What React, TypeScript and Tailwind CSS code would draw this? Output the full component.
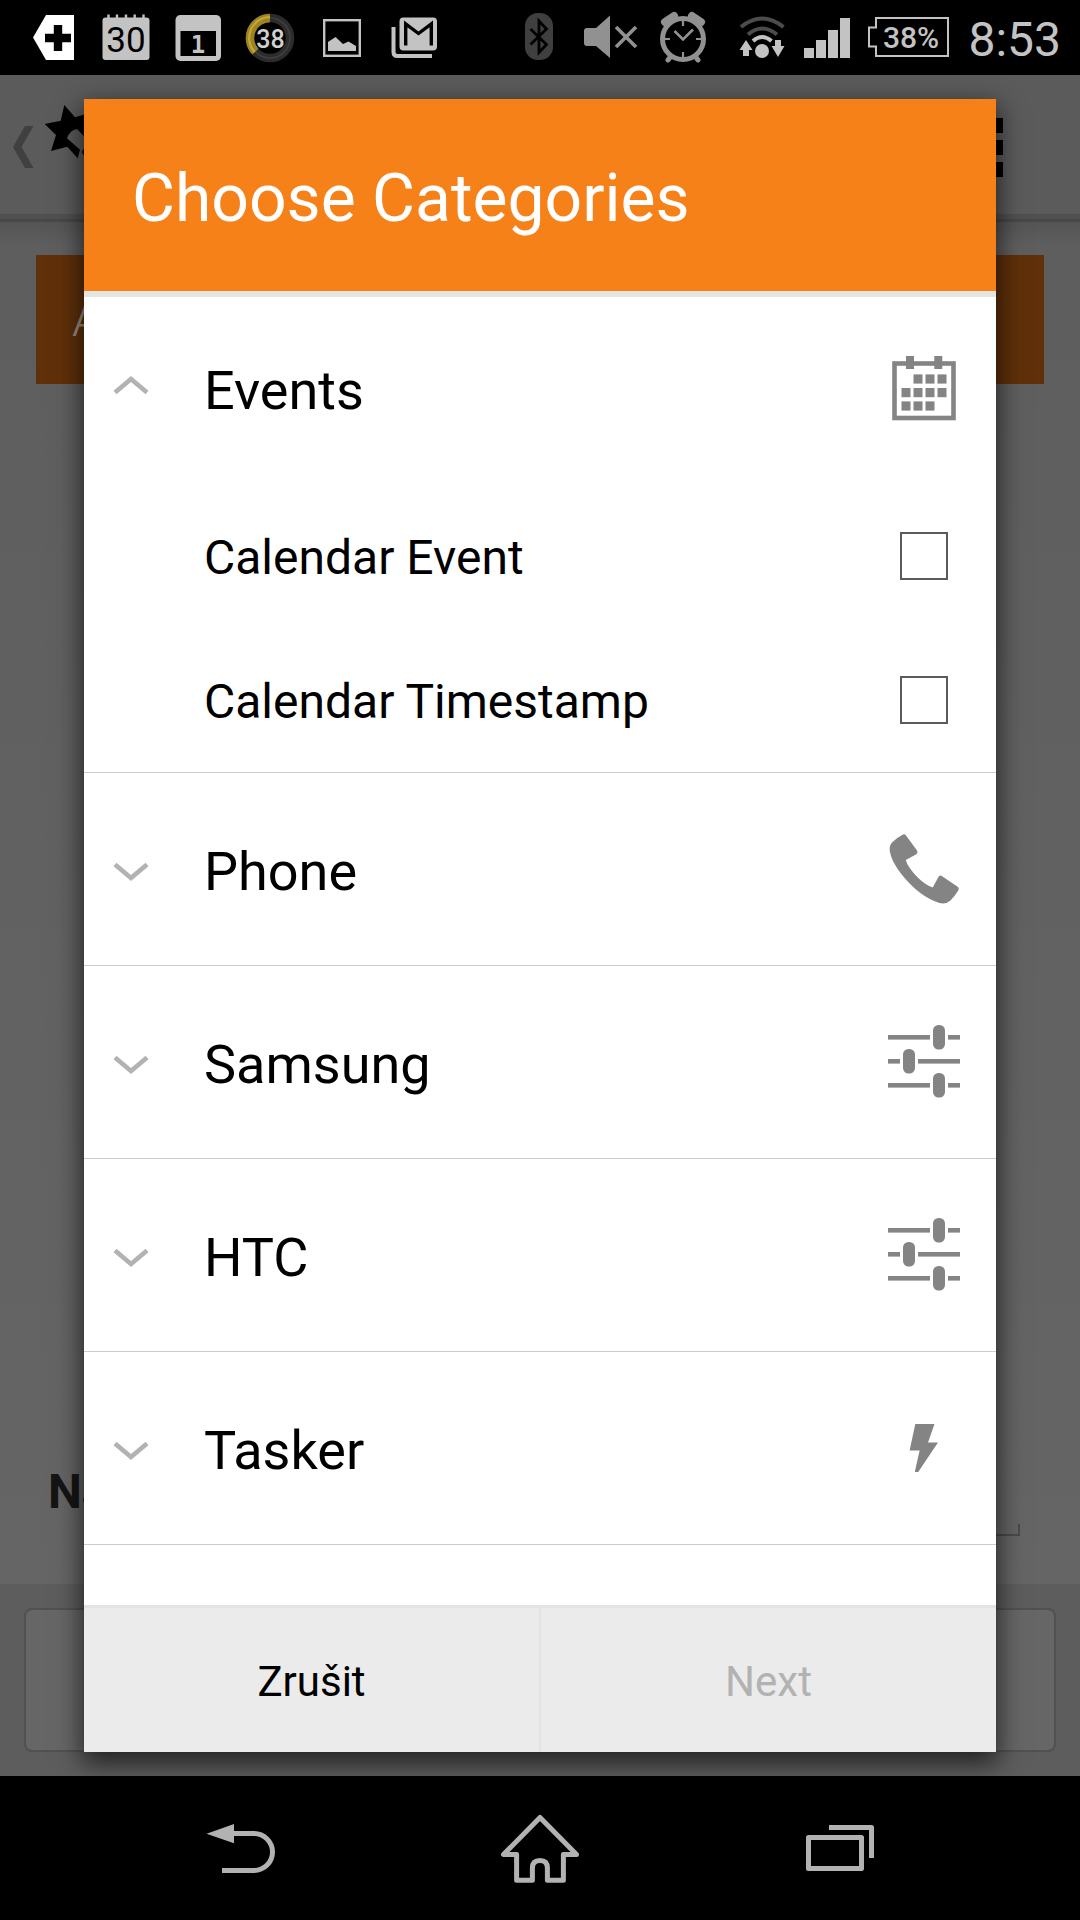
import React, { useState } from 'react';

interface Category {
  name: string;
  icon: React.ReactNode;
  items: string[];
}

const CalendarIcon = () => (
  <svg className="h-[72px] w-[72px]" viewBox="0 0 72 72" fill="#848484">
    <rect x="6.5" y="11.5" width="59" height="54.5" fill="none" stroke="#848484" strokeWidth="4.6" />
    <rect x="18" y="4" width="8" height="13" />
    <rect x="46.3" y="4" width="8" height="13" />
    {[25.5, 37.5, 49.5].map(x => <rect key={x} x={x} y="22.4" width="9" height="9.2" />)}
    {[13.5, 25.5, 37.5, 49.5].map(x => <rect key={x} x={x} y="36" width="9" height="9.2" />)}
    {[13.5, 25.5, 37.5].map(x => <rect key={x} x={x} y="49.4" width="9" height="9.2" />)}
  </svg>
);

const PhoneIcon = () => (
  <svg className="h-[72px] w-[72px]" viewBox="0 0 72 72" fill="#848484">
    <path d="M15 1.5 Q16.6 .6 18 2.4 L29.2 17.8 Q30.2 19.6 28.4 21.2 L17.8 27 Q19.5 34 30 44.8 Q37.5 52 44.7 54.6 L50.6 43.8 Q51.8 41.8 53.8 43 L70 54 Q71.5 55.4 70.4 57.2 Q66.5 63.5 62.5 67.4 Q58 71.5 51.5 70 Q32 64 14.5 42.5 Q3 28.5 1.7 17.5 Q1.2 13 4 9.6 Q8.5 4.8 15 1.5 Z" />
  </svg>
);

const SlidersIcon = () => (
  <svg className="h-[72px] w-[72px] overflow-visible" viewBox="0 0 72 72" fill="#848484">
    <rect x="0" y="9" width="42" height="4.6" />
    <rect x="60" y="9" width="12" height="4.6" />
    <rect x="45" y="-1" width="12" height="24.6" rx="5.5" />
    <rect x="0" y="33" width="12" height="4.6" />
    <rect x="30" y="33" width="42" height="4.6" />
    <rect x="15" y="23" width="12" height="24.6" rx="5.5" />
    <rect x="0" y="57" width="42" height="4.6" />
    <rect x="60" y="57" width="12" height="4.6" />
    <rect x="45" y="47" width="12" height="24.6" rx="5.5" />
  </svg>
);

const BoltIcon = () => (
  <svg className="h-[72px] w-[72px]" viewBox="0 0 72 72" fill="#848484">
    <path d="M27.3 12 H46.5 L40 30.4 H50 L30.2 60 H26.8 L31.6 38.6 H21.6 Z" />
  </svg>
);

const categories: Category[] = [
  { name: 'Events', icon: <CalendarIcon />, items: ['Calendar Event', 'Calendar Timestamp'] },
  { name: 'Phone', icon: <PhoneIcon />, items: [] },
  { name: 'Samsung', icon: <SlidersIcon />, items: [] },
  { name: 'HTC', icon: <SlidersIcon />, items: [] },
  { name: 'Tasker', icon: <BoltIcon />, items: [] },
];

const StatusBar = () => (
  <div className="flex h-[75px] items-center justify-between bg-black pr-[19px] pl-[18px]">
    <div className="flex">
      <svg className="h-[75px] w-[72px]" viewBox="18 0 72 75">
        <path d="M33 37.5 L46 15 H74 V60 H46 Z" fill="#fff" />
        <path d="M45 38 H71 M58 25 V51" stroke="#000" strokeWidth="8.4" />
      </svg>
      <svg className="h-[75px] w-[72px]" viewBox="90 0 72 75">
        <rect x="102.5" y="17.5" width="47" height="42.5" rx="3" fill="#c3c3c3" />
        <path d="M108.5 14.5 V20 M117 14.5 V20 M126 14.5 V20 M134.7 14.5 V20 M143.5 14.5 V20" stroke="#c3c3c3" strokeWidth="2.4" />
        <text x="126" y="52" textAnchor="middle" fontSize="35" fontWeight="400" fill="#000">30</text>
      </svg>
      <svg className="h-[75px] w-[72px]" viewBox="162 0 72 75">
        <rect x="175.5" y="15" width="45.5" height="46" rx="5" fill="#c3c3c3" />
        <rect x="180.5" y="31" width="35.5" height="25" fill="#000" />
        <text x="198" y="53" textAnchor="middle" fontSize="24" fontWeight="700" fontFamily="DejaVu Sans Mono, monospace" fill="#c3c3c3">1</text>
      </svg>
      <svg className="h-[75px] w-[72px]" viewBox="234 0 72 75">
        <circle cx="270" cy="38" r="20" fill="none" stroke="#2c2c2c" strokeWidth="8.5" />
        <circle cx="270" cy="38" r="20" fill="none" stroke="#404040" strokeWidth="1.5" />
        <path d="M270 18 A20 20 0 0 0 255.4 51.7" fill="none" stroke="#9d8420" strokeWidth="8.5" />
        <path d="M270 17 A21 21 0 0 0 254.5 52" fill="none" stroke="#c4a93a" strokeWidth="2" />
        <text x="270.5" y="47.5" textAnchor="middle" fontSize="25" fontWeight="500" fill="#d0d0d0">38</text>
      </svg>
      <svg className="h-[75px] w-[72px]" viewBox="306 0 72 75">
        <rect x="324.2" y="20.2" width="35.6" height="35.6" fill="none" stroke="#c3c3c3" strokeWidth="2.4" />
        <path d="M328 51 V42 L335.5 37 L343 44 L348.5 41.5 L356 46 V51 Z" fill="#c3c3c3" />
      </svg>
      <svg className="h-[75px] w-[72px]" viewBox="378 0 72 75">
        <path d="M393.5 27 V52 Q393.5 56 397.5 56 H432" fill="none" stroke="#c3c3c3" strokeWidth="4" />
        <rect x="399.5" y="17.5" width="37.5" height="33" rx="4" fill="#c3c3c3" />
        <path d="M405.7 45.5 V24 L418.5 33.5 L431.3 24 V45.5" fill="none" stroke="#000" strokeWidth="3.4" />
      </svg>
    </div>
    <div className="flex items-center">
      <svg className="h-[75px] w-[72px]" viewBox="503 0 72 75">
        <rect x="525" y="13" width="28" height="47" rx="13" fill="#3f3f3f" />
        <path d="M530.5 29 L546.5 44.5 L539 52.5 V21 L546.5 29 L530.5 44.5" fill="none" stroke="#000" strokeWidth="2.8" />
      </svg>
      <svg className="h-[75px] w-[72px]" viewBox="575 0 72 75">
        <path d="M587 28 H596 L610 15.5 V58 L596 46 H587 Q584 46 584 43 V31 Q584 28 587 28 Z" fill="#919191" />
        <path d="M616 27 L636 47 M636 27 L616 47" stroke="#919191" strokeWidth="3.6" />
      </svg>
      <svg className="h-[75px] w-[72px]" viewBox="647 0 72 75" stroke="#919191" fill="none">
        <circle cx="683" cy="39" r="20.5" strokeWidth="5" />
        <path d="M665 22 L674 16 M701 22 L692 16" strokeWidth="8" strokeLinecap="round" />
        <path d="M671 56 L668 60 M695 56 L698 60" strokeWidth="5" strokeLinecap="round" />
        <path d="M674.5 31 L683 39.5 L693 29.5" strokeWidth="2.6" />
        <path d="M683 21 V26 M683 52 V57 M665 39 H670 M696 39 H701" strokeWidth="2.2" />
      </svg>
      <svg className="ml-5 h-[75px] w-[46px]" viewBox="739 0 46 75" fill="none">
        <path d="M741 27 Q762 10 783.5 27" stroke="#4c4c4c" strokeWidth="4" />
        <path d="M748 34.5 Q762 22.5 777 34.5" stroke="#4c4c4c" strokeWidth="4" />
        <path d="M753 41 Q762 33 771.5 41" stroke="#c3c3c3" strokeWidth="4" />
        <circle cx="762" cy="51" r="7" fill="#c3c3c3" />
        <path d="M746 40 L752.5 50 H749 V56 H743 V50 H739.5 Z" fill="#c3c3c3" />
        <path d="M778 57 L784.5 46 H781 V40 H775 V46 H771.5 Z" fill="#c3c3c3" />
      </svg>
      <svg className="ml-[18px] h-[75px] w-[47px]" viewBox="803 0 47 75" fill="#c3c3c3">
        <rect x="804" y="48" width="10" height="10" />
        <rect x="816" y="40" width="10" height="18" />
        <rect x="828" y="30" width="10" height="28" />
        <rect x="840" y="18" width="10" height="40" />
      </svg>
      <svg className="ml-[18px] h-[75px] w-[82px]" viewBox="868 0 82 75">
        <path d="M876 18 H948 V56 H876 V46.5 H869 V27.5 H876 Z" fill="none" stroke="#c3c3c3" strokeWidth="2" />
        <text x="911" y="48" textAnchor="middle" fontSize="30" fontWeight="500" fill="#c3c3c3">38%</text>
      </svg>
      <span className="ml-[18px] pt-1 text-5xl text-[#c3c3c3]">8:53</span>
    </div>
  </div>
);

const NavBar = () => (
  <nav className="flex h-36 items-center bg-black px-[90px]">
    <button className="flex flex-1 justify-center" aria-label="Back">
      <svg className="h-24 w-24" viewBox="0 0 96 96">
        <path d="M14.5 33.7 L42 24 V43.2 Z" fill="#b2b2b2" />
        <path d="M40 33.5 H62 A18.5 18.5 0 0 1 62 70.5 H30" fill="none" stroke="#b2b2b2" strokeWidth="5" />
      </svg>
    </button>
    <button className="flex flex-1 justify-center" aria-label="Home">
      <svg className="h-24 w-24" viewBox="0 0 96 96" fill="none" stroke="#b2b2b2" strokeWidth="5">
        <path d="M48 17.5 L11.5 54.5 H24.6 V80.3 H40.4 V68 Q40.4 60.5 48 60.5 Q55.4 60.5 55.4 68 V80.3 H71.4 V54.5 H84.5 Z" strokeLinejoin="round" />
      </svg>
    </button>
    <button className="flex flex-1 justify-center" aria-label="Recent apps">
      <svg className="h-24 w-24" viewBox="0 0 96 96" fill="none" stroke="#b2b2b2" strokeWidth="5">
        <rect x="16.5" y="37.5" width="53" height="31" strokeLinejoin="round" />
        <path d="M37 27.5 H79.5 V58" strokeLinejoin="round" />
      </svg>
    </button>
  </nav>
);

// Dimmed screen that stays visible around the dialog
const Backdrop = () => (
  <div className="flex flex-1 flex-col bg-linear-to-b from-[#5d5d5d] to-[#666666]">
    <header className="flex h-[147px] items-start justify-between border-b-[3px] border-[#484848] bg-[#5b5b5b] shadow-[inset_0_-5px_0_#505050]">
      <button className="flex" aria-label="Navigate up">
        <svg className="h-[140px] w-24" viewBox="0 75 96 140">
          <path d="M25 126 H33.5 L21.5 147 L33.5 168 H25 L13 147 Z" fill="#404040" />
          <path d="M64.3 105 L75 117.3 L90 113 V141 L84 136.3 L77 129 Q70 130 67 138.3 L80 149.7 L77.7 158.3 L67.3 146.7 L51 151 L56 135 L44.7 124 L60.7 120.7 Z M90 144 L84 148.6 L81.5 152 L84 155.5 L90 158 Z" fill="#000" />
        </svg>
      </button>
      <button className="mt-[43px] mr-[77px] flex flex-col gap-[7px]" aria-label="Menu">
        <span className="h-[15px] w-[15px] bg-black" />
        <span className="h-[15px] w-[15px] bg-black" />
        <span className="h-[15px] w-[15px] bg-black" />
      </button>
    </header>
    <div className="h-[21px] bg-linear-to-b from-[#545454] to-[#5d5d5d]" />
    <div className="mt-3 flex px-9">
      <button className="h-[129px] flex-1 bg-[#5f300a] px-9 text-left text-5xl font-light text-[#9a8f86]">A</button>
    </div>
    <div className="flex-1" />
    <div className="mr-[60px] mb-12 ml-12 flex items-end gap-4">
      <label htmlFor="name" className="pb-5 text-5xl font-bold text-[#151515]">Na</label>
      <input id="name" className="h-3 flex-1 border-x-2 border-b-2 border-[#4a4a4a] bg-transparent" />
    </div>
    <div className="flex h-48 bg-[#5d5d5d] p-6">
      <div className="flex-1 rounded-lg border-2 border-[#515151] bg-[#666666]" />
    </div>
  </div>
);

const App: React.FC = () => {
  const [open, setOpen] = useState<string[]>(['Events']);
  const [checked, setChecked] = useState<string[]>([]);

  const toggle = (list: string[], value: string) =>
    list.includes(value) ? list.filter(v => v !== value) : [...list, value];

  return (
    <div className="flex min-h-screen flex-col bg-black font-[Roboto,sans-serif]">
      <StatusBar />

      <main className="relative flex flex-1 flex-col overflow-hidden">
        <Backdrop />

        <div className="absolute inset-0 flex px-[84px] py-6">
          <div role="dialog" className="flex flex-1 flex-col bg-white shadow-[0_9px_24px_2px_rgba(0,0,0,0.65)]">
            <div className="relative flex h-48 shrink-0 items-center bg-[#f78119] px-12">
              <h1 className="pt-2 text-[66px] leading-none text-white">Choose Categories</h1>
              <div className="absolute inset-x-0 top-full h-1.5 bg-[#e5e5e5]" />
            </div>

            {/* Category list */}
            <ul className="min-h-0 flex-1 overflow-y-auto pt-px">
              {categories.map(category => {
                const expanded = open.includes(category.name);
                return (
                  <li key={category.name} className="border-b border-[#cccccc]">
                    <button
                      onClick={() => setOpen(toggle(open, category.name))}
                      className="flex h-48 w-full items-center pr-9 pl-6 text-left"
                    >
                      <svg className="h-12 w-12" viewBox="0 0 48 48" fill="none" stroke="#b2b2b2" strokeWidth="4.6">
                        <path d={expanded ? 'M7 28.5 L23 15 L39 28.5' : 'M7 19.5 L23 33 L39 19.5'} />
                      </svg>
                      <span className="flex-1 pt-1.5 pl-12 text-[54px] leading-none">{category.name}</span>
                      {category.icon}
                    </button>
                    {expanded && category.items.map(item => (
                      <label key={item} className="flex h-36 items-center justify-between pr-12 pl-[120px]">
                        <span className="pt-1 text-5xl leading-none">{item}</span>
                        <input
                          type="checkbox"
                          checked={checked.includes(item)}
                          onChange={() => setChecked(toggle(checked, item))}
                          className="h-12 w-12 appearance-none border-2 border-[#5b5b5b] bg-white checked:bg-[#f78119]"
                        />
                      </label>
                    ))}
                  </li>
                );
              })}
            </ul>

            <div className="flex h-[147px] shrink-0 border-t-[3px] border-[#e4e4e4] bg-[#ebebeb] text-[42px]">
              <button className="flex-1 border-r-2 border-[#e3e3e3] pt-0.5 text-black">Zrušit</button>
              <button disabled={checked.length === 0} className="flex-1 pt-0.5 text-black disabled:text-[#b2b2b2]">Next</button>
            </div>
          </div>
        </div>
      </main>

      <NavBar />
    </div>
  );
};

export default App;
